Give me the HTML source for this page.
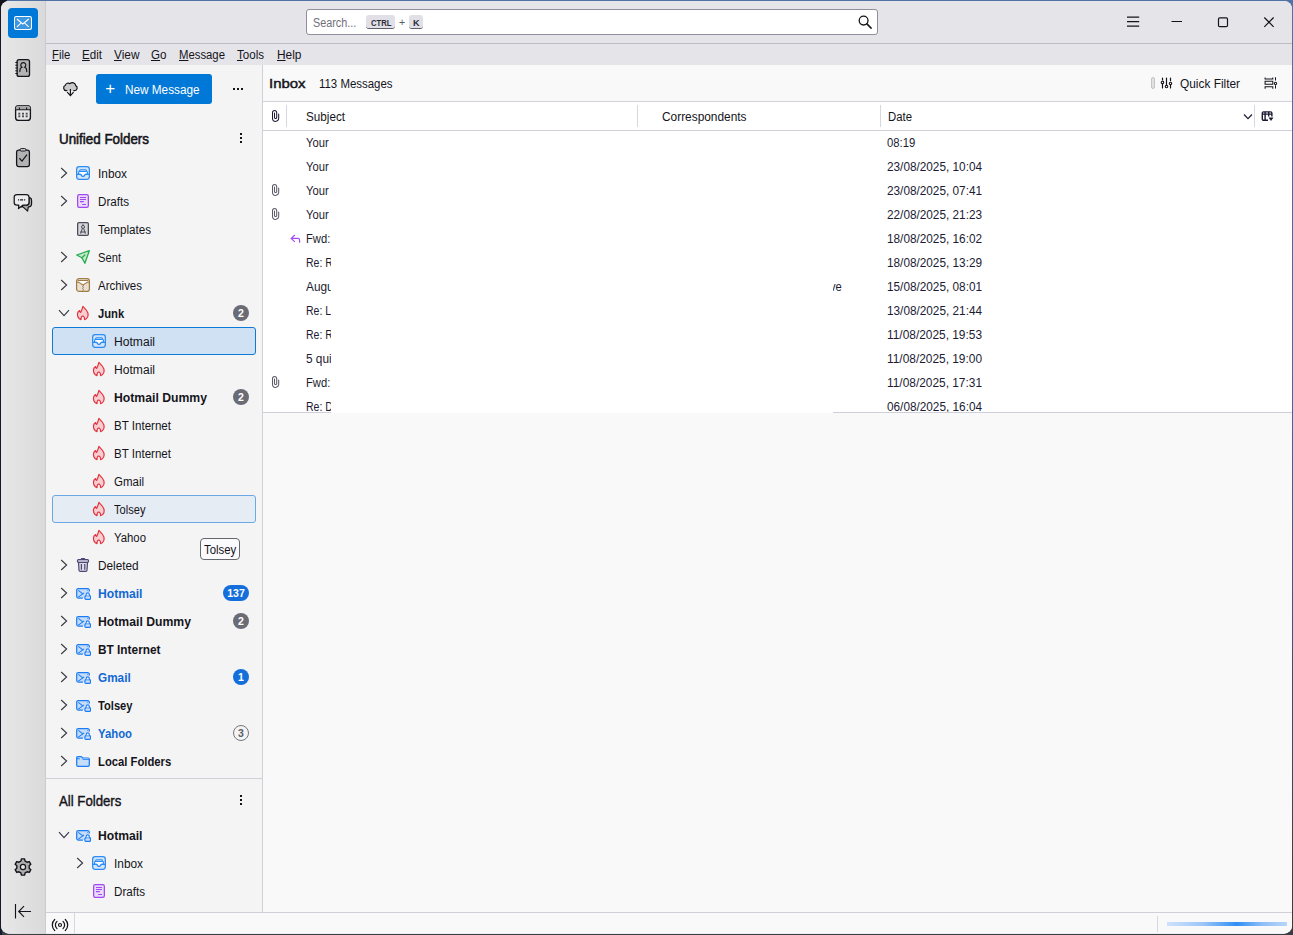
<!DOCTYPE html>
<html lang="en"><head><meta charset="utf-8"><title>Inbox - Mozilla Thunderbird</title>
<style>

html,body{margin:0;padding:0}
body{width:1293px;height:935px;overflow:hidden;background:linear-gradient(#10131c,#10131c) 0 0/7px 7px no-repeat,linear-gradient(90deg,#141a2c 0,#141a2c 2px,transparent 2px),linear-gradient(180deg,#5272a6 0,#5272a6 3px,#4468a8 40%,#3b4a66 80%,#3a3d42 98%);font-family:"Liberation Sans",sans-serif;position:relative}
#win{position:absolute;left:0;top:0;width:1293px;height:935px;clip-path:inset(1px 1px 1.300px 1px round 8px);background:#f9f9fa;color:#15141a;font-size:12px}
#win div,#win svg,#win span{position:absolute}
.t{white-space:pre;transform-origin:0 0}
.u{text-decoration:underline;text-underline-offset:0.5px;text-decoration-thickness:1px}
#spaces{left:0;top:0;width:45px;height:935px;background:linear-gradient(90deg,#e8e8e8,#dadada);border-right:1px solid #cbcbd0}
#titlebar{left:46px;top:0;width:1247px;height:43px;background:#e4e4e9;border-bottom:1px solid #bcbcc4}
#menubar{left:46px;top:44px;width:1247px;height:21px;background:#e4e4e9}
#fpane{left:46px;top:65px;width:216px;height:847px;background:#f4f4f5;border-right:1px solid #d0d0d8}
#lhead{left:263px;top:65px;width:1030px;height:36px;background:#f9f9fa;border-bottom:1px solid #d2d2dc}
#thead{left:263px;top:102px;width:1030px;height:28px;background:#fff;border-bottom:1px solid #cfcfda}
#rows{left:263px;top:131px;width:1030px;height:281px;background:#fff;border-bottom:1px solid #cfcfda}
#redact{left:331px;top:131px;width:502px;height:282px;background:#fff}
#status{left:46px;top:912px;width:1247px;height:22px;background:#f9f9fa;border-top:1px solid #cfcfd8;box-sizing:border-box}
.vsep{width:1px;background:#d7d7e0}
.badge{height:16px;border-radius:8px;box-sizing:border-box;color:#fff;font-weight:700;font-size:10.500px;line-height:16px;text-align:center}
.kbd{height:13px;background:#e0e0e6;border-bottom:1px solid #5e5e6a;border-radius:3px;box-sizing:content-box}

</style></head>
<body>
<div id="win">
<div id="spaces"></div><div id="titlebar"></div><div id="menubar"></div><div id="fpane"></div>
<div id="lhead"></div><div id="thead"></div><div id="rows"></div>
<div style="left:8px;top:8px;width:30px;height:30px;border-radius:4px;background:#0078d7"></div>
<svg style="left:14px;top:16px" width="18" height="14" viewBox="0 0 18 14" ><rect x="0.500" y="0.500" width="17" height="13" rx="2" fill="#3d97e0" stroke="#fff" stroke-width="1.050"/><path d="M2.900 3L8.800 8l5.900-5M2.900 10.800l4-3.700M14.700 10.800l-4-3.700" fill="none" stroke="#fff" stroke-width="1.050"/></svg>
<svg style="left:14px;top:58px" width="18" height="20" viewBox="0 0 18 20" ><rect x="3.100" y="1.600" width="12.400" height="16.800" rx="2" fill="#b2b2b2" stroke="#15141a" stroke-width="1.350"/><path d="M1.300 4.500h2.400M1.300 7.200h2.400M1.300 10h2.400M1.300 12.800h2.400M1.300 15.500h2.400" stroke="#15141a" stroke-width="1"/><path d="M5.900 13.600v-1.400a3.200 3.200 0 0 1 2-3 2.500 2.500 0 1 1 2.800 0 3.200 3.200 0 0 1 2 3v1.400" fill="none" stroke="#15141a" stroke-width="1.150" stroke-linecap="round"/></svg>
<svg style="left:14px;top:104px" width="18" height="18" viewBox="0 0 18 18" ><rect x="1.600" y="1.600" width="14.800" height="14.800" rx="3" fill="#e6e6e6" stroke="#15141a" stroke-width="1.350"/><path d="M1.800 5.600h14.400V4.400a2.600 2.600 0 0 0-2.600-2.600H4.400a2.600 2.600 0 0 0-2.600 2.600z" fill="#a8a8a8"/><path d="M1.800 5.800h14.400" stroke="#15141a" stroke-width="1.100"/><path d="M5.400 3.600v2.200M12.600 3.600v2.200" stroke="#15141a" stroke-width="1.100"/><path d="M4.300 9.300h2M8 9.300h2M11.700 9.300h2M4.300 11h2M8 11h2M11.700 11h2M4.300 12.700h2M8 12.700h2M11.700 12.700h2" stroke="#15141a" stroke-width="0.9"/></svg>
<svg style="left:14px;top:147px" width="18" height="22" viewBox="0 0 18 22" ><rect x="2.600" y="3.200" width="12.800" height="16.400" rx="2" fill="#b2b2b2" stroke="#15141a" stroke-width="1.300"/><rect x="6" y="1.600" width="6" height="2.400" rx="1.200" fill="#d8d8d8" stroke="#15141a" stroke-width="1"/><path d="M5.400 11.300l2.600 2.800 5-6.400" fill="none" stroke="#15141a" stroke-width="1.250"/></svg>
<svg style="left:12px;top:192px" width="22" height="22" viewBox="0 0 22 22" ><path d="M17 5.600a2.700 2.700 0 0 1 2.600 2.700v3.800a2.700 2.700 0 0 1-2.700 2.700h-.6l-.7 4.400-4.600-4.400H9l2-1.600h3.300a2.700 2.700 0 0 0 2.700-2.700z" fill="#a9a9a9" stroke="#15141a" stroke-width="1.150" stroke-linejoin="round"/><path d="M4.900 2.500h9.400A2.700 2.700 0 0 1 17 5.200v5.300a2.700 2.700 0 0 1-2.700 2.700H10.800l-4.300 3.300.3-3.300H4.900a2.700 2.700 0 0 1-2.700-2.700V5.200a2.700 2.700 0 0 1 2.700-2.700z" fill="#ececec" stroke="#15141a" stroke-width="1.250" stroke-linejoin="round"/><path d="M6 7.800h1.100M8.100 7.800h3M12.100 7.800h1.100" stroke="#15141a" stroke-width="1.200"/></svg>
<svg style="left:13px;top:857px" width="20" height="20" viewBox="0 0 20 20" ><path d="M8.43 1.85 L11.57 1.85 L12.10 4.06 L14.09 5.21 L16.27 4.57 L17.84 7.28 L16.19 8.85 L16.19 11.15 L17.84 12.72 L16.27 15.43 L14.09 14.79 L12.10 15.94 L11.57 18.15 L8.43 18.15 L7.90 15.94 L5.91 14.79 L3.73 15.43 L2.16 12.72 L3.81 11.15 L3.81 8.85 L2.16 7.28 L3.73 4.57 L5.91 5.21 L7.90 4.06Z" fill="#adadad" stroke="#15141a" stroke-width="1.400" stroke-linejoin="round"/><circle cx="10" cy="10" r="2.600" fill="#e6e6e6" stroke="#15141a" stroke-width="1.200"/></svg>
<svg style="left:13px;top:903px" width="20" height="18" viewBox="0 0 20 18" ><path d="M2.500 1v14.600M18 8.500H6M11 3.200L5.700 8.500l5.300 5.300" fill="none" stroke="#15141a" stroke-width="1.150"/></svg>
<div style="left:306px;top:9px;width:570px;height:24px;background:#fff;border:1px solid #8f8f9d;border-radius:3px"></div>
<div class="kbd" style="left:366px;top:15px;width:29px"></div>
<div class="kbd" style="left:409px;top:15px;width:13.500px"></div>
<svg style="left:857px;top:14px" width="16" height="16" viewBox="0 0 16 16" ><circle cx="6.600" cy="6.600" r="4.400" fill="none" stroke="#15141a" stroke-width="1.300"/><path d="M9.900 9.900l4.200 4.200" stroke="#15141a" stroke-width="1.500" stroke-linecap="round"/></svg>
<svg style="left:1126px;top:15px" width="14" height="13" viewBox="0 0 14 13" ><path d="M1 2.200h12.200M1 6.600h12.200M1 11.100h12.200" stroke="#15141a" stroke-width="1.200"/></svg>
<svg style="left:1171px;top:20px" width="12" height="3" viewBox="0 0 12 3" ><path d="M0.500 1.500h10.500" stroke="#15141a" stroke-width="1.100"/></svg>
<svg style="left:1216px;top:15px" width="13" height="13" viewBox="0 0 13 13" ><rect x="2.500" y="2.900" width="9" height="8.700" rx="1.200" fill="none" stroke="#15141a" stroke-width="1.200"/></svg>
<svg style="left:1262px;top:15px" width="13" height="13" viewBox="0 0 13 13" ><path d="M2.300 2.500l9.300 9.300M11.600 2.500l-9.300 9.300" stroke="#15141a" stroke-width="1.200"/></svg>
<svg style="left:61px;top:79px" width="18" height="18" viewBox="0 0 18 18" ><path d="M5.900 11.700H5.200A2.900 2.900 0 0 1 4.300 6.200 3 3 0 0 1 9 4.700 3.300 3.300 0 0 1 14.700 6.600 2.700 2.700 0 0 1 13.400 11.700H12.800" fill="#c9c9c9" stroke="#15141a" stroke-width="1.200" stroke-linejoin="round" stroke-linecap="round"/><path d="M9.400 10v6.300M6.200 13.200l3.200 3.400 3.200-3.400" fill="none" stroke="#15141a" stroke-width="1.200"/></svg>
<div style="left:96px;top:74px;width:116px;height:30px;border-radius:3px;background:#0078d7"></div>
<svg style="left:233px;top:88px" width="10" height="2" viewBox="0 0 10 2" shape-rendering="crispEdges"><path d="M0 0h2v2H0zM4 0h2v2H4zM8 0h2v2H8z" fill="#15141a"/></svg>
<svg style="left:240px;top:133px" width="2" height="10" viewBox="0 0 2 10" shape-rendering="crispEdges"><path d="M0 0h2v2H0zM0 4h2v2H0zM0 8h2v2H0z" fill="#15141a"/></svg>
<div style="left:52px;top:327px;width:202px;height:26px;border:1px solid #0b7ad8;border-radius:3px;background:#cfe1f2"></div>
<div style="left:52px;top:495px;width:202px;height:26px;border:1px solid #6aa9e6;border-radius:3px;background:#e6ecf4"></div>
<svg style="left:59px;top:166px" width="10" height="14" viewBox="0 0 10 14" ><path d="M2.200 2l5.400 5-5.400 5" fill="none" stroke="#3a3a44" stroke-width="1.15" stroke-linejoin="miter"/></svg>
<svg style="left:75px;top:165px" width="16" height="16" viewBox="0 0 16 16" ><rect x="1.650" y="1.650" width="12.700" height="12.700" rx="2.500" fill="#d5e5f8" stroke="#2b8cf5" stroke-width="1.250"/><path d="M4.700 6.500V5.500a.6.600 0 0 1 .6-.6h5.400a.6.600 0 0 1 .6.600v1" fill="#fff" stroke="#2b8cf5" stroke-width="1.100"/><path d="M3.600 9.300V7.200a.7.700 0 0 1 .7-.7h7.400a.7.700 0 0 1 .7.700V9.300h-1.800c-.9 0-1.200 2.200-2.600 2.200S6.300 9.300 5.400 9.300z" fill="#fff" stroke="#2b8cf5" stroke-width="1.100" stroke-linejoin="round"/><path d="M1.800 9.300H5.400c.9 0 1.200 2.200 2.600 2.200s1.700-2.200 2.600-2.200h3.600" fill="none" stroke="#2b8cf5" stroke-width="1.150"/></svg>
<svg style="left:59px;top:194px" width="10" height="14" viewBox="0 0 10 14" ><path d="M2.200 2l5.400 5-5.400 5" fill="none" stroke="#3a3a44" stroke-width="1.15" stroke-linejoin="miter"/></svg>
<svg style="left:75px;top:193px" width="16" height="16" viewBox="0 0 16 16" ><rect x="2.650" y="1.650" width="10.700" height="12.700" rx="1.600" fill="#e9dcf8" stroke="#a347f2" stroke-width="1.25"/><path d="M5 4.500h6M5 6.500h6M5 8.600h3.800M7.200 11.500h3.800" stroke="#a347f2" stroke-width="1.1"/></svg>
<svg style="left:75px;top:221px" width="16" height="16" viewBox="0 0 16 16" ><rect x="2.650" y="1.650" width="10.700" height="12.700" rx="1.200" fill="#d6d6da" stroke="#4b4b58" stroke-width="1.25"/><circle cx="8" cy="5.900" r="1.500" fill="none" stroke="#4b4b58" stroke-width="1"/><path d="M8 3.200v1.200M7.400 7.300L5.600 12.600M8.600 7.300l1.800 5.300M5.200 11h5.600" stroke="#4b4b58" stroke-width="1" fill="none"/></svg>
<svg style="left:59px;top:250px" width="10" height="14" viewBox="0 0 10 14" ><path d="M2.200 2l5.400 5-5.400 5" fill="none" stroke="#3a3a44" stroke-width="1.15" stroke-linejoin="miter"/></svg>
<svg style="left:75px;top:249px" width="16" height="16" viewBox="0 0 16 16" ><path d="M1.700 6L14.300 1.700 9.900 14.300 6.900 8.800z" fill="#c5e8cf" stroke="#24ad4c" stroke-width="1.3" stroke-linejoin="round"/><path d="M6.900 8.800L9.900 6" stroke="#24ad4c" stroke-width="1.2" stroke-linecap="round"/></svg>
<svg style="left:59px;top:278px" width="10" height="14" viewBox="0 0 10 14" ><path d="M2.200 2l5.400 5-5.400 5" fill="none" stroke="#3a3a44" stroke-width="1.15" stroke-linejoin="miter"/></svg>
<svg style="left:75px;top:277px" width="16" height="16" viewBox="0 0 16 16" ><rect x="1.600" y="1.600" width="12.800" height="12.800" rx="2.500" fill="#e9e1d6" stroke="#a27c45" stroke-width="1.25"/><path d="M2.400 3.500h11.200v1.600h-1L8 8 3.400 5.100h-1z" fill="#fff"/><path d="M2.600 3.500h10.800M1.800 5.100h1.700L8 8l4.500-2.900h1.700" fill="none" stroke="#a27c45" stroke-width="1.1" stroke-linejoin="round"/><path d="M8 8l.6.700-1.200.900 1.200.900-1.200.900 1.200.900-.6.700v1.200" fill="none" stroke="#a27c45" stroke-width="0.9"/></svg>
<svg style="left:57px;top:308px" width="14" height="10" viewBox="0 0 14 10" ><path d="M2 2.200l5 5.400 5-5.400" fill="none" stroke="#3a3a44" stroke-width="1.15"/></svg>
<svg style="left:75px;top:305px" width="16" height="16" viewBox="0 0 16 16" ><path d="M7.900 1.300C9 3 12 4.800 12.900 8c.6 2.600-.4 5.600-3.300 6.600C9.600 12.800 9 11.100 7.700 11 6.500 11.100 6 12.800 6 14.600C3.600 13.700 2.300 11.200 2.500 8.800 2.700 7.300 3.500 6.200 4.500 5.600C4.500 6.500 4.900 7.200 5.600 7.500 6.500 5.800 7.300 3.800 7.900 1.300z" fill="#f6cdd0" stroke="#e5343e" stroke-width="1.2" stroke-linejoin="round"/></svg>
<div class="badge" style="left:233px;top:305px;width:16px;background:#6b6b76">2</div>
<svg style="left:91px;top:333px" width="16" height="16" viewBox="0 0 16 16" ><rect x="1.650" y="1.650" width="12.700" height="12.700" rx="2.500" fill="#d5e5f8" stroke="#2b8cf5" stroke-width="1.250"/><path d="M4.700 6.500V5.500a.6.600 0 0 1 .6-.6h5.400a.6.600 0 0 1 .6.600v1" fill="#fff" stroke="#2b8cf5" stroke-width="1.100"/><path d="M3.600 9.300V7.200a.7.700 0 0 1 .7-.7h7.400a.7.700 0 0 1 .7.700V9.300h-1.800c-.9 0-1.200 2.200-2.600 2.200S6.300 9.300 5.400 9.300z" fill="#fff" stroke="#2b8cf5" stroke-width="1.100" stroke-linejoin="round"/><path d="M1.800 9.300H5.400c.9 0 1.200 2.200 2.600 2.200s1.700-2.200 2.600-2.200h3.600" fill="none" stroke="#2b8cf5" stroke-width="1.150"/></svg>
<svg style="left:91px;top:361px" width="16" height="16" viewBox="0 0 16 16" ><path d="M7.900 1.300C9 3 12 4.800 12.900 8c.6 2.600-.4 5.600-3.300 6.600C9.600 12.800 9 11.100 7.700 11 6.500 11.100 6 12.800 6 14.600C3.600 13.700 2.300 11.200 2.500 8.800 2.700 7.300 3.500 6.200 4.500 5.600C4.500 6.500 4.900 7.200 5.600 7.500 6.500 5.800 7.300 3.800 7.900 1.300z" fill="#f6cdd0" stroke="#e5343e" stroke-width="1.2" stroke-linejoin="round"/></svg>
<svg style="left:91px;top:389px" width="16" height="16" viewBox="0 0 16 16" ><path d="M7.900 1.300C9 3 12 4.800 12.900 8c.6 2.600-.4 5.600-3.300 6.600C9.600 12.800 9 11.100 7.700 11 6.500 11.100 6 12.800 6 14.600C3.600 13.700 2.300 11.200 2.500 8.800 2.700 7.300 3.500 6.200 4.500 5.600C4.500 6.500 4.900 7.200 5.600 7.500 6.500 5.800 7.300 3.800 7.900 1.300z" fill="#f6cdd0" stroke="#e5343e" stroke-width="1.2" stroke-linejoin="round"/></svg>
<div class="badge" style="left:233px;top:389px;width:16px;background:#6b6b76">2</div>
<svg style="left:91px;top:417px" width="16" height="16" viewBox="0 0 16 16" ><path d="M7.900 1.300C9 3 12 4.800 12.900 8c.6 2.600-.4 5.600-3.300 6.600C9.600 12.800 9 11.100 7.700 11 6.500 11.100 6 12.800 6 14.600C3.600 13.700 2.300 11.200 2.500 8.800 2.700 7.300 3.500 6.200 4.500 5.600C4.500 6.500 4.900 7.200 5.600 7.500 6.500 5.800 7.300 3.800 7.900 1.300z" fill="#f6cdd0" stroke="#e5343e" stroke-width="1.2" stroke-linejoin="round"/></svg>
<svg style="left:91px;top:445px" width="16" height="16" viewBox="0 0 16 16" ><path d="M7.900 1.300C9 3 12 4.800 12.900 8c.6 2.600-.4 5.600-3.300 6.600C9.600 12.800 9 11.100 7.700 11 6.500 11.100 6 12.800 6 14.600C3.600 13.700 2.300 11.200 2.500 8.800 2.700 7.300 3.500 6.200 4.500 5.600C4.500 6.500 4.900 7.200 5.600 7.500 6.500 5.800 7.300 3.800 7.900 1.300z" fill="#f6cdd0" stroke="#e5343e" stroke-width="1.2" stroke-linejoin="round"/></svg>
<svg style="left:91px;top:473px" width="16" height="16" viewBox="0 0 16 16" ><path d="M7.900 1.300C9 3 12 4.800 12.900 8c.6 2.600-.4 5.600-3.300 6.600C9.600 12.800 9 11.100 7.700 11 6.500 11.100 6 12.800 6 14.600C3.600 13.700 2.300 11.200 2.500 8.800 2.700 7.300 3.500 6.200 4.500 5.600C4.500 6.500 4.900 7.200 5.600 7.500 6.500 5.800 7.300 3.800 7.900 1.300z" fill="#f6cdd0" stroke="#e5343e" stroke-width="1.2" stroke-linejoin="round"/></svg>
<svg style="left:91px;top:501px" width="16" height="16" viewBox="0 0 16 16" ><path d="M7.900 1.300C9 3 12 4.800 12.900 8c.6 2.600-.4 5.600-3.300 6.600C9.600 12.800 9 11.100 7.700 11 6.500 11.100 6 12.800 6 14.600C3.600 13.700 2.300 11.200 2.500 8.800 2.700 7.300 3.500 6.200 4.500 5.600C4.500 6.500 4.900 7.200 5.600 7.500 6.500 5.800 7.300 3.800 7.900 1.300z" fill="#f6cdd0" stroke="#e5343e" stroke-width="1.2" stroke-linejoin="round"/></svg>
<svg style="left:91px;top:529px" width="16" height="16" viewBox="0 0 16 16" ><path d="M7.900 1.300C9 3 12 4.800 12.900 8c.6 2.600-.4 5.600-3.300 6.600C9.600 12.800 9 11.100 7.700 11 6.500 11.100 6 12.800 6 14.600C3.600 13.700 2.300 11.200 2.500 8.800 2.700 7.300 3.500 6.200 4.500 5.600C4.500 6.500 4.900 7.200 5.600 7.500 6.500 5.800 7.300 3.800 7.900 1.300z" fill="#f6cdd0" stroke="#e5343e" stroke-width="1.2" stroke-linejoin="round"/></svg>
<svg style="left:59px;top:558px" width="10" height="14" viewBox="0 0 10 14" ><path d="M2.200 2l5.400 5-5.400 5" fill="none" stroke="#3a3a44" stroke-width="1.15" stroke-linejoin="miter"/></svg>
<svg style="left:75px;top:557px" width="16" height="16" viewBox="0 0 16 16" ><path d="M3.500 5.400h9l-.5 7.800a1.300 1.300 0 0 1-1.300 1.200H5.300a1.300 1.300 0 0 1-1.300-1.200z" fill="#dcdae6" stroke="#4b4674" stroke-width="1.2" stroke-linejoin="round"/><path d="M6.300 2.400V2a.5.500 0 0 1 .5-.5h2.400a.5.500 0 0 1 .5.500v.4" fill="none" stroke="#4b4674" stroke-width="1.1"/><rect x="2.500" y="2.600" width="11" height="2.700" rx="1" fill="#dcdae6" stroke="#4b4674" stroke-width="1.2"/><path d="M6.400 7v5.700M9.800 7v5.700" stroke="#4b4674" stroke-width="1.2"/></svg>
<svg style="left:59px;top:586px" width="10" height="14" viewBox="0 0 10 14" ><path d="M2.200 2l5.400 5-5.400 5" fill="none" stroke="#3a3a44" stroke-width="1.15" stroke-linejoin="miter"/></svg>
<svg style="left:75px;top:585px" width="16" height="16" viewBox="0 0 16 16" ><path d="M1.700 5.200a1.500 1.500 0 0 1 1.500-1.500h9.600a1.500 1.500 0 0 1 1.500 1.500v2.200h-3.500l-1.500 2.400v3.300H3.200a1.500 1.500 0 0 1-1.500-1.500z" fill="#c6dcf7"/><path d="M7.900 13.100H3.200a1.500 1.500 0 0 1-1.500-1.500V5.200a1.500 1.500 0 0 1 1.500-1.500h9.600a1.500 1.500 0 0 1 1.500 1.500v1.300" fill="none" stroke="#1b7df5" stroke-width="1.25"/><path d="M3.300 5.300L7.800 8.900 3.300 12.200" fill="none" stroke="#1b7df5" stroke-width="1.05" stroke-linejoin="round"/><path d="M7.800 8.900l1.300-1M12.100 5.500l.5-.4" stroke="#1b7df5" stroke-width="1.05"/><rect x="9.900" y="10.700" width="5.600" height="3.600" rx="1" fill="#c6dcf7" stroke="#1b7df5" stroke-width="1.2"/><path d="M11.100 10.600V9.500a1.600 1.600 0 0 1 3.200 0v1.100" fill="#fff" stroke="#1b7df5" stroke-width="1.200"/></svg>
<div class="badge" style="left:223px;top:585px;width:26px;background:#146fdb">137</div>
<svg style="left:59px;top:614px" width="10" height="14" viewBox="0 0 10 14" ><path d="M2.200 2l5.400 5-5.400 5" fill="none" stroke="#3a3a44" stroke-width="1.15" stroke-linejoin="miter"/></svg>
<svg style="left:75px;top:613px" width="16" height="16" viewBox="0 0 16 16" ><path d="M1.700 5.200a1.500 1.500 0 0 1 1.500-1.500h9.600a1.500 1.500 0 0 1 1.500 1.500v2.200h-3.500l-1.500 2.400v3.300H3.200a1.500 1.500 0 0 1-1.500-1.500z" fill="#c6dcf7"/><path d="M7.900 13.100H3.200a1.500 1.500 0 0 1-1.500-1.500V5.200a1.500 1.500 0 0 1 1.500-1.500h9.600a1.500 1.500 0 0 1 1.500 1.500v1.300" fill="none" stroke="#1b7df5" stroke-width="1.25"/><path d="M3.300 5.300L7.800 8.900 3.300 12.200" fill="none" stroke="#1b7df5" stroke-width="1.05" stroke-linejoin="round"/><path d="M7.800 8.900l1.300-1M12.100 5.500l.5-.4" stroke="#1b7df5" stroke-width="1.05"/><rect x="9.900" y="10.700" width="5.600" height="3.600" rx="1" fill="#c6dcf7" stroke="#1b7df5" stroke-width="1.2"/><path d="M11.100 10.600V9.500a1.600 1.600 0 0 1 3.200 0v1.100" fill="#fff" stroke="#1b7df5" stroke-width="1.200"/></svg>
<div class="badge" style="left:233px;top:613px;width:16px;background:#6b6b76">2</div>
<svg style="left:59px;top:642px" width="10" height="14" viewBox="0 0 10 14" ><path d="M2.200 2l5.400 5-5.400 5" fill="none" stroke="#3a3a44" stroke-width="1.15" stroke-linejoin="miter"/></svg>
<svg style="left:75px;top:641px" width="16" height="16" viewBox="0 0 16 16" ><path d="M1.700 5.200a1.500 1.500 0 0 1 1.500-1.500h9.600a1.500 1.500 0 0 1 1.500 1.500v2.200h-3.500l-1.500 2.400v3.300H3.200a1.500 1.500 0 0 1-1.500-1.500z" fill="#c6dcf7"/><path d="M7.900 13.100H3.200a1.500 1.500 0 0 1-1.500-1.500V5.200a1.500 1.500 0 0 1 1.500-1.500h9.600a1.500 1.500 0 0 1 1.500 1.500v1.300" fill="none" stroke="#1b7df5" stroke-width="1.25"/><path d="M3.300 5.300L7.800 8.900 3.300 12.200" fill="none" stroke="#1b7df5" stroke-width="1.05" stroke-linejoin="round"/><path d="M7.800 8.900l1.300-1M12.100 5.500l.5-.4" stroke="#1b7df5" stroke-width="1.05"/><rect x="9.900" y="10.700" width="5.600" height="3.600" rx="1" fill="#c6dcf7" stroke="#1b7df5" stroke-width="1.2"/><path d="M11.100 10.600V9.500a1.600 1.600 0 0 1 3.200 0v1.100" fill="#fff" stroke="#1b7df5" stroke-width="1.200"/></svg>
<svg style="left:59px;top:670px" width="10" height="14" viewBox="0 0 10 14" ><path d="M2.200 2l5.400 5-5.400 5" fill="none" stroke="#3a3a44" stroke-width="1.15" stroke-linejoin="miter"/></svg>
<svg style="left:75px;top:669px" width="16" height="16" viewBox="0 0 16 16" ><path d="M1.700 5.200a1.500 1.500 0 0 1 1.500-1.500h9.600a1.500 1.500 0 0 1 1.500 1.500v2.200h-3.500l-1.500 2.400v3.300H3.200a1.500 1.500 0 0 1-1.500-1.500z" fill="#c6dcf7"/><path d="M7.900 13.100H3.200a1.500 1.500 0 0 1-1.500-1.500V5.200a1.500 1.500 0 0 1 1.500-1.500h9.600a1.500 1.500 0 0 1 1.500 1.500v1.300" fill="none" stroke="#1b7df5" stroke-width="1.25"/><path d="M3.300 5.300L7.800 8.900 3.300 12.200" fill="none" stroke="#1b7df5" stroke-width="1.05" stroke-linejoin="round"/><path d="M7.800 8.900l1.300-1M12.100 5.500l.5-.4" stroke="#1b7df5" stroke-width="1.05"/><rect x="9.900" y="10.700" width="5.600" height="3.600" rx="1" fill="#c6dcf7" stroke="#1b7df5" stroke-width="1.2"/><path d="M11.100 10.600V9.500a1.600 1.600 0 0 1 3.200 0v1.100" fill="#fff" stroke="#1b7df5" stroke-width="1.200"/></svg>
<div class="badge" style="left:233px;top:669px;width:16px;background:#146fdb">1</div>
<svg style="left:59px;top:698px" width="10" height="14" viewBox="0 0 10 14" ><path d="M2.200 2l5.400 5-5.400 5" fill="none" stroke="#3a3a44" stroke-width="1.15" stroke-linejoin="miter"/></svg>
<svg style="left:75px;top:697px" width="16" height="16" viewBox="0 0 16 16" ><path d="M1.700 5.200a1.500 1.500 0 0 1 1.500-1.500h9.600a1.500 1.500 0 0 1 1.500 1.500v2.200h-3.500l-1.500 2.400v3.300H3.200a1.500 1.500 0 0 1-1.500-1.500z" fill="#c6dcf7"/><path d="M7.900 13.100H3.200a1.500 1.500 0 0 1-1.500-1.500V5.200a1.500 1.500 0 0 1 1.500-1.500h9.600a1.500 1.500 0 0 1 1.500 1.500v1.300" fill="none" stroke="#1b7df5" stroke-width="1.25"/><path d="M3.300 5.300L7.800 8.900 3.300 12.200" fill="none" stroke="#1b7df5" stroke-width="1.05" stroke-linejoin="round"/><path d="M7.800 8.900l1.300-1M12.100 5.500l.5-.4" stroke="#1b7df5" stroke-width="1.05"/><rect x="9.900" y="10.700" width="5.600" height="3.600" rx="1" fill="#c6dcf7" stroke="#1b7df5" stroke-width="1.2"/><path d="M11.100 10.600V9.500a1.600 1.600 0 0 1 3.200 0v1.100" fill="#fff" stroke="#1b7df5" stroke-width="1.200"/></svg>
<svg style="left:59px;top:726px" width="10" height="14" viewBox="0 0 10 14" ><path d="M2.200 2l5.400 5-5.400 5" fill="none" stroke="#3a3a44" stroke-width="1.15" stroke-linejoin="miter"/></svg>
<svg style="left:75px;top:725px" width="16" height="16" viewBox="0 0 16 16" ><path d="M1.700 5.200a1.500 1.500 0 0 1 1.500-1.500h9.600a1.500 1.500 0 0 1 1.500 1.500v2.200h-3.500l-1.500 2.400v3.300H3.200a1.500 1.500 0 0 1-1.500-1.500z" fill="#c6dcf7"/><path d="M7.900 13.100H3.200a1.500 1.500 0 0 1-1.500-1.500V5.200a1.500 1.500 0 0 1 1.500-1.500h9.600a1.500 1.500 0 0 1 1.500 1.500v1.300" fill="none" stroke="#1b7df5" stroke-width="1.25"/><path d="M3.300 5.300L7.800 8.900 3.300 12.200" fill="none" stroke="#1b7df5" stroke-width="1.05" stroke-linejoin="round"/><path d="M7.800 8.900l1.300-1M12.100 5.500l.5-.4" stroke="#1b7df5" stroke-width="1.05"/><rect x="9.900" y="10.700" width="5.600" height="3.600" rx="1" fill="#c6dcf7" stroke="#1b7df5" stroke-width="1.2"/><path d="M11.100 10.600V9.500a1.600 1.600 0 0 1 3.200 0v1.100" fill="#fff" stroke="#1b7df5" stroke-width="1.200"/></svg>
<div class="badge" style="left:233px;top:725px;width:16px;border:1px solid #74747f;color:#5b5b66;line-height:14px;font-weight:700">3</div>
<svg style="left:59px;top:754px" width="10" height="14" viewBox="0 0 10 14" ><path d="M2.200 2l5.400 5-5.400 5" fill="none" stroke="#3a3a44" stroke-width="1.15" stroke-linejoin="miter"/></svg>
<svg style="left:75px;top:753px" width="16" height="16" viewBox="0 0 16 16" ><path d="M1.700 4.700a1.100 1.100 0 0 1 1.100-1.100h3.500l1.600 1.400h5.300a1.100 1.100 0 0 1 1.100 1.100v5.900a1.300 1.300 0 0 1-1.300 1.300H3a1.300 1.300 0 0 1-1.300-1.300z" fill="#c6dcf7" stroke="#1b7df5" stroke-width="1.25" stroke-linejoin="round"/><path d="M8.300 5.100h5.400v.5H8.300z" fill="#fff"/><path d="M1.900 5.800H4.800M7.600 6.200h6.600" fill="none" stroke="#1b7df5" stroke-width="1.1"/></svg>
<svg style="left:57px;top:830px" width="14" height="10" viewBox="0 0 14 10" ><path d="M2 2.200l5 5.400 5-5.400" fill="none" stroke="#3a3a44" stroke-width="1.15"/></svg>
<svg style="left:75px;top:827px" width="16" height="16" viewBox="0 0 16 16" ><path d="M1.700 5.200a1.500 1.500 0 0 1 1.500-1.500h9.600a1.500 1.500 0 0 1 1.500 1.500v2.200h-3.500l-1.500 2.400v3.300H3.200a1.500 1.500 0 0 1-1.500-1.500z" fill="#c6dcf7"/><path d="M7.900 13.100H3.200a1.500 1.500 0 0 1-1.500-1.500V5.200a1.500 1.500 0 0 1 1.500-1.500h9.600a1.500 1.500 0 0 1 1.500 1.500v1.300" fill="none" stroke="#1b7df5" stroke-width="1.25"/><path d="M3.300 5.300L7.800 8.900 3.300 12.200" fill="none" stroke="#1b7df5" stroke-width="1.05" stroke-linejoin="round"/><path d="M7.800 8.900l1.300-1M12.100 5.500l.5-.4" stroke="#1b7df5" stroke-width="1.05"/><rect x="9.900" y="10.700" width="5.600" height="3.600" rx="1" fill="#c6dcf7" stroke="#1b7df5" stroke-width="1.2"/><path d="M11.100 10.600V9.500a1.600 1.600 0 0 1 3.200 0v1.100" fill="#fff" stroke="#1b7df5" stroke-width="1.200"/></svg>
<svg style="left:75px;top:856px" width="10" height="14" viewBox="0 0 10 14" ><path d="M2.200 2l5.400 5-5.400 5" fill="none" stroke="#3a3a44" stroke-width="1.15" stroke-linejoin="miter"/></svg>
<svg style="left:91px;top:855px" width="16" height="16" viewBox="0 0 16 16" ><rect x="1.650" y="1.650" width="12.700" height="12.700" rx="2.500" fill="#d5e5f8" stroke="#2b8cf5" stroke-width="1.250"/><path d="M4.700 6.500V5.500a.6.600 0 0 1 .6-.6h5.400a.6.600 0 0 1 .6.600v1" fill="#fff" stroke="#2b8cf5" stroke-width="1.100"/><path d="M3.600 9.300V7.200a.7.700 0 0 1 .7-.7h7.400a.7.700 0 0 1 .7.700V9.300h-1.800c-.9 0-1.200 2.200-2.600 2.200S6.300 9.300 5.400 9.300z" fill="#fff" stroke="#2b8cf5" stroke-width="1.100" stroke-linejoin="round"/><path d="M1.800 9.300H5.400c.9 0 1.200 2.200 2.600 2.200s1.700-2.200 2.600-2.200h3.600" fill="none" stroke="#2b8cf5" stroke-width="1.150"/></svg>
<svg style="left:91px;top:883px" width="16" height="16" viewBox="0 0 16 16" ><rect x="2.650" y="1.650" width="10.700" height="12.700" rx="1.600" fill="#e9dcf8" stroke="#a347f2" stroke-width="1.25"/><path d="M5 4.500h6M5 6.500h6M5 8.600h3.800M7.200 11.500h3.800" stroke="#a347f2" stroke-width="1.1"/></svg>
<div style="left:46px;top:778px;width:216px;height:1px;background:#d0d0d8"></div>
<svg style="left:240px;top:795px" width="2" height="10" viewBox="0 0 2 10" shape-rendering="crispEdges"><path d="M0 0h2v2H0zM0 4h2v2H0zM0 8h2v2H0z" fill="#15141a"/></svg>
<div style="left:1151px;top:77px;width:4px;height:12px;border:1px solid #c4c4c8;border-radius:2px;box-sizing:border-box;background:#e2e2e4"></div>
<svg style="left:1160px;top:77px" width="13" height="13" viewBox="0 0 13 13" ><path d="M2.500 1.100v1.600M2.500 6.700v4.200M6.500 1.100v7.200M10.500 1.100v2.600M10.500 7.800v3.100" stroke="#15141a" stroke-width="1.200" stroke-linecap="round"/><circle cx="2.500" cy="5.400" r="1.250" fill="none" stroke="#15141a" stroke-width="1.100"/><circle cx="6.500" cy="9.500" r="1.250" fill="none" stroke="#15141a" stroke-width="1.100"/><circle cx="10.500" cy="6.500" r="1.250" fill="none" stroke="#15141a" stroke-width="1.100"/></svg>
<svg style="left:1264px;top:76px" width="14" height="14" viewBox="0 0 14 14" ><path d="M1.100 1.400v1.500h7.700v-1.500M1.100 5.300h7.700v3h-7.700zM1.100 12.700v-2h7.700v2M11.500 1.300v3.300M11.500 9.300v3.300" fill="none" stroke="#15141a" stroke-width="1.050"/><circle cx="11.500" cy="7.400" r="1.150" fill="none" stroke="#15141a" stroke-width="1.050"/></svg>
<svg style="left:270px;top:109px" width="10" height="14" viewBox="0 0 10 14" ><path d="M4.500 4V8.400a1.100 1.100 0 0 0 2.200 0V3.500a2.100 2.100 0 0 0-4.200 0V9.300a3.100 3.100 0 0 0 6.200 0V5" fill="none" stroke="#1c1b33" stroke-width="1.050" stroke-linecap="round"/></svg>
<div class="vsep" style="left:286px;top:105px;height:22px"></div>
<div class="vsep" style="left:637px;top:105px;height:22px"></div>
<div class="vsep" style="left:880px;top:105px;height:22px"></div>
<div class="vsep" style="left:1254px;top:105px;height:22px"></div>
<svg style="left:1243px;top:112.5px" width="10" height="8" viewBox="0 0 10 8" ><path d="M1 1.500l4 4.200 4-4.200" fill="none" stroke="#1c1b33" stroke-width="1.200"/></svg>
<svg style="left:1261px;top:110px" width="13" height="12" viewBox="0 0 13 12" ><path d="M7 10.300H2.600a1.300 1.300 0 0 1-1.300-1.300V3.200a1.300 1.300 0 0 1 1.300-1.300h7a1.300 1.300 0 0 1 1.300 1.300V6.500M1.300 4.100h9.600M4.100 1.900v8.400M7.700 1.900v4.600" fill="none" stroke="#1c1b33" stroke-width="1.400"/><path d="M7.500 7.400h5l-2.500 3.500z" fill="#1c1b33"/></svg>
<svg style="left:270px;top:183.2px" width="10" height="14" viewBox="0 0 10 14" ><path d="M4.500 4V8.400a1.100 1.100 0 0 0 2.200 0V3.500a2.100 2.100 0 0 0-4.200 0V9.300a3.100 3.100 0 0 0 6.200 0V5" fill="none" stroke="#5a5a66" stroke-width="1.050" stroke-linecap="round"/></svg>
<svg style="left:270px;top:207.2px" width="10" height="14" viewBox="0 0 10 14" ><path d="M4.500 4V8.400a1.100 1.100 0 0 0 2.200 0V3.500a2.100 2.100 0 0 0-4.200 0V9.300a3.100 3.100 0 0 0 6.200 0V5" fill="none" stroke="#5a5a66" stroke-width="1.050" stroke-linecap="round"/></svg>
<svg style="left:270px;top:375.2px" width="10" height="14" viewBox="0 0 10 14" ><path d="M4.500 4V8.400a1.100 1.100 0 0 0 2.200 0V3.500a2.100 2.100 0 0 0-4.200 0V9.300a3.100 3.100 0 0 0 6.200 0V5" fill="none" stroke="#5a5a66" stroke-width="1.050" stroke-linecap="round"/></svg>
<svg style="left:289px;top:233px" width="12" height="11" viewBox="0 0 12 11" ><path d="M5.900 2L2.200 5.400l3.700 3.400M2.400 5.400H9a1.600 1.600 0 0 1 1.600 1.600V9.700" fill="none" stroke="#a64af2" stroke-width="1.150"/></svg>
<span class="t" style="left:313.3px;top:14.74px;font-size:12px;line-height:17px;color:#6f6f7a;transform:scaleX(0.901);">Search...</span>
<span class="t" style="left:370.5px;top:15.91px;font-size:9.5px;line-height:13px;font-weight:700;color:#2d2d38;transform:scaleX(0.809);">CTRL</span>
<span class="t" style="left:399.3px;top:14.89px;font-size:11px;line-height:15px;color:#5b5b66;transform:scaleX(0.960);">+</span>
<span class="t" style="left:413.0px;top:15.91px;font-size:9.5px;line-height:13px;font-weight:700;color:#2d2d38;transform:scaleX(0.960);">K</span>
<span class="t" style="left:51.8px;top:47.14px;font-size:12px;line-height:17px;transform:scaleX(0.940);"><span class="u" style="position:static">F</span>ile</span>
<span class="t" style="left:81.9px;top:47.14px;font-size:12px;line-height:17px;transform:scaleX(0.966);"><span class="u" style="position:static">E</span>dit</span>
<span class="t" style="left:113.9px;top:47.14px;font-size:12px;line-height:17px;transform:scaleX(0.988);"><span class="u" style="position:static">V</span>iew</span>
<span class="t" style="left:151.0px;top:47.14px;font-size:12px;line-height:17px;transform:scaleX(0.967);"><span class="u" style="position:static">G</span>o</span>
<span class="t" style="left:179.0px;top:47.14px;font-size:12px;line-height:17px;transform:scaleX(0.944);"><span class="u" style="position:static">M</span>essage</span>
<span class="t" style="left:237.0px;top:47.14px;font-size:12px;line-height:17px;transform:scaleX(0.964);"><span class="u" style="position:static">T</span>ools</span>
<span class="t" style="left:276.7px;top:47.14px;font-size:12px;line-height:17px;transform:scaleX(0.992);"><span class="u" style="position:static">H</span>elp</span>
<span class="t" style="left:105.3px;top:76.71px;font-size:17px;line-height:24px;color:#fff;">+</span>
<span class="t" style="left:125.0px;top:81.47px;font-size:12.5px;line-height:18px;color:#fff;transform:scaleX(0.941);">New Message</span>
<span class="t" style="left:58.5px;top:129.15px;font-size:14px;line-height:20px;transform:scaleX(0.956);-webkit-text-stroke:0.55px #15141a;">Unified Folders</span>
<span class="t" style="left:98.4px;top:165.74px;font-size:12px;line-height:17px;transform:scaleX(0.988);">Inbox</span>
<span class="t" style="left:98.4px;top:193.74px;font-size:12px;line-height:17px;transform:scaleX(0.968);">Drafts</span>
<span class="t" style="left:98.4px;top:221.74px;font-size:12px;line-height:17px;transform:scaleX(0.969);">Templates</span>
<span class="t" style="left:98.4px;top:249.74px;font-size:12px;line-height:17px;transform:scaleX(0.932);">Sent</span>
<span class="t" style="left:98.4px;top:277.74px;font-size:12px;line-height:17px;transform:scaleX(0.956);">Archives</span>
<span class="t" style="left:98.4px;top:306.24px;font-size:12px;line-height:17px;font-weight:700;transform:scaleX(0.935);">Junk</span>
<span class="t" style="left:114.4px;top:333.74px;font-size:12px;line-height:17px;transform:scaleX(1.008);">Hotmail</span>
<span class="t" style="left:114.4px;top:361.74px;font-size:12px;line-height:17px;transform:scaleX(1.008);">Hotmail</span>
<span class="t" style="left:114.4px;top:390.24px;font-size:12px;line-height:17px;font-weight:700;transform:scaleX(1.018);">Hotmail Dummy</span>
<span class="t" style="left:114.4px;top:417.74px;font-size:12px;line-height:17px;transform:scaleX(0.964);">BT Internet</span>
<span class="t" style="left:114.4px;top:445.74px;font-size:12px;line-height:17px;transform:scaleX(0.964);">BT Internet</span>
<span class="t" style="left:114.4px;top:473.74px;font-size:12px;line-height:17px;transform:scaleX(0.957);">Gmail</span>
<span class="t" style="left:114.4px;top:501.74px;font-size:12px;line-height:17px;transform:scaleX(0.926);">Tolsey</span>
<span class="t" style="left:114.4px;top:529.74px;font-size:12px;line-height:17px;transform:scaleX(0.946);">Yahoo</span>
<span class="t" style="left:98.4px;top:557.74px;font-size:12px;line-height:17px;transform:scaleX(0.981);">Deleted</span>
<span class="t" style="left:98.4px;top:586.24px;font-size:12px;line-height:17px;font-weight:700;color:#1268d3;transform:scaleX(1.011);">Hotmail</span>
<span class="t" style="left:98.4px;top:614.24px;font-size:12px;line-height:17px;font-weight:700;transform:scaleX(1.018);">Hotmail Dummy</span>
<span class="t" style="left:98.4px;top:642.24px;font-size:12px;line-height:17px;font-weight:700;transform:scaleX(0.987);">BT Internet</span>
<span class="t" style="left:98.4px;top:670.24px;font-size:12px;line-height:17px;font-weight:700;color:#1268d3;transform:scaleX(0.980);">Gmail</span>
<span class="t" style="left:98.4px;top:698.24px;font-size:12px;line-height:17px;font-weight:700;transform:scaleX(0.929);">Tolsey</span>
<span class="t" style="left:98.4px;top:726.24px;font-size:12px;line-height:17px;font-weight:700;color:#1268d3;transform:scaleX(0.944);">Yahoo</span>
<span class="t" style="left:98.4px;top:754.24px;font-size:12px;line-height:17px;font-weight:700;transform:scaleX(0.938);">Local Folders</span>
<span class="t" style="left:98.4px;top:828.24px;font-size:12px;line-height:17px;font-weight:700;transform:scaleX(1.011);">Hotmail</span>
<span class="t" style="left:114.4px;top:855.74px;font-size:12px;line-height:17px;transform:scaleX(0.988);">Inbox</span>
<span class="t" style="left:114.4px;top:883.74px;font-size:12px;line-height:17px;transform:scaleX(0.968);">Drafts</span>
<span class="t" style="left:58.5px;top:791.15px;font-size:14px;line-height:20px;transform:scaleX(0.942);-webkit-text-stroke:0.4px #15141a;">All Folders</span>
<span class="t" style="left:269.2px;top:74.42px;font-size:13.5px;line-height:19px;transform:scaleX(1.108);-webkit-text-stroke:0.45px #15141a;">Inbox</span>
<span class="t" style="left:318.8px;top:75.64px;font-size:12px;line-height:17px;transform:scaleX(0.953);">113 Messages</span>
<span class="t" style="left:1180.0px;top:75.64px;font-size:12px;line-height:17px;transform:scaleX(0.989);">Quick Filter</span>
<span class="t" style="left:305.9px;top:109.04px;font-size:12px;line-height:17px;transform:scaleX(0.974);">Subject</span>
<span class="t" style="left:662.0px;top:109.04px;font-size:12px;line-height:17px;transform:scaleX(0.990);">Correspondents</span>
<span class="t" style="left:887.5px;top:109.04px;font-size:12px;line-height:17px;transform:scaleX(0.946);">Date</span>
<span class="t rc" style="left:306.0px;top:135.04px;font-size:12px;line-height:17px;color:#1c1b33;transform:scaleX(0.935);">Your</span>
<span class="t rc" style="left:886.8px;top:135.04px;font-size:12px;line-height:17px;color:#1c1b33;transform:scaleX(0.939);">08:19</span>
<span class="t rc" style="left:306.0px;top:159.04px;font-size:12px;line-height:17px;color:#1c1b33;transform:scaleX(0.935);">Your</span>
<span class="t rc" style="left:886.8px;top:159.04px;font-size:12px;line-height:17px;color:#1c1b33;transform:scaleX(0.982);">23/08/2025, 10:04</span>
<span class="t rc" style="left:306.0px;top:183.04px;font-size:12px;line-height:17px;color:#1c1b33;transform:scaleX(0.935);">Your</span>
<span class="t rc" style="left:886.8px;top:183.04px;font-size:12px;line-height:17px;color:#1c1b33;transform:scaleX(0.982);">23/08/2025, 07:41</span>
<span class="t rc" style="left:306.0px;top:207.04px;font-size:12px;line-height:17px;color:#1c1b33;transform:scaleX(0.935);">Your</span>
<span class="t rc" style="left:886.8px;top:207.04px;font-size:12px;line-height:17px;color:#1c1b33;transform:scaleX(0.982);">22/08/2025, 21:23</span>
<span class="t rc" style="left:306.0px;top:231.04px;font-size:12px;line-height:17px;color:#1c1b33;transform:scaleX(0.935);">Fwd:</span>
<span class="t rc" style="left:886.8px;top:231.04px;font-size:12px;line-height:17px;color:#1c1b33;transform:scaleX(0.982);">18/08/2025, 16:02</span>
<span class="t rc" style="left:306.0px;top:255.04px;font-size:12px;line-height:17px;color:#1c1b33;transform:scaleX(0.875);">Re: R</span>
<span class="t rc" style="left:886.8px;top:255.04px;font-size:12px;line-height:17px;color:#1c1b33;transform:scaleX(0.982);">18/08/2025, 13:29</span>
<span class="t rc" style="left:306.0px;top:279.04px;font-size:12px;line-height:17px;color:#1c1b33;transform:scaleX(0.985);">Augu</span>
<span class="t rc" style="left:886.8px;top:279.04px;font-size:12px;line-height:17px;color:#1c1b33;transform:scaleX(0.982);">15/08/2025, 08:01</span>
<span class="t rc" style="left:306.0px;top:303.04px;font-size:12px;line-height:17px;color:#1c1b33;transform:scaleX(0.875);">Re: L</span>
<span class="t rc" style="left:886.8px;top:303.04px;font-size:12px;line-height:17px;color:#1c1b33;transform:scaleX(0.982);">13/08/2025, 21:44</span>
<span class="t rc" style="left:306.0px;top:327.04px;font-size:12px;line-height:17px;color:#1c1b33;transform:scaleX(0.875);">Re: R</span>
<span class="t rc" style="left:886.8px;top:327.04px;font-size:12px;line-height:17px;color:#1c1b33;transform:scaleX(0.991);">11/08/2025, 19:53</span>
<span class="t rc" style="left:306.0px;top:351.04px;font-size:12px;line-height:17px;color:#1c1b33;transform:scaleX(0.985);">5 qui</span>
<span class="t rc" style="left:886.8px;top:351.04px;font-size:12px;line-height:17px;color:#1c1b33;transform:scaleX(0.991);">11/08/2025, 19:00</span>
<span class="t rc" style="left:306.0px;top:375.04px;font-size:12px;line-height:17px;color:#1c1b33;transform:scaleX(0.935);">Fwd:</span>
<span class="t rc" style="left:886.8px;top:375.04px;font-size:12px;line-height:17px;color:#1c1b33;transform:scaleX(0.991);">11/08/2025, 17:31</span>
<span class="t rc" style="left:306.0px;top:399.04px;font-size:12px;line-height:17px;color:#1c1b33;transform:scaleX(0.875);">Re: D</span>
<span class="t rc" style="left:886.8px;top:399.04px;font-size:12px;line-height:17px;color:#1c1b33;transform:scaleX(0.982);">06/08/2025, 16:04</span>
<span class="t rc" style="left:830.3px;top:279.04px;font-size:12px;line-height:17px;color:#1c1b33;transform:scaleX(0.935);">ve</span>
<div style="left:200px;top:538px;width:38px;height:20px;border:1px solid #66666e;border-radius:4px;background:#fbfbfd"></div>
<span class="t" style="left:203.800px;top:541.500px;font-size:12px;line-height:16px;transform:scaleX(0.950)">Tolsey</span>
<div id="redact"></div>
<div style="left:263px;top:413px;width:1030px;height:499px;background:#f9f9fa"></div>
<div style="left:263px;top:412px;width:68px;height:1px;background:#cfcfda"></div><div style="left:833px;top:412px;width:460px;height:1px;background:#cfcfda"></div>
<div id="status"></div>
<svg style="left:51px;top:917.5px" width="18" height="14" viewBox="0 0 18 14" ><circle cx="9" cy="7" r="1.500" fill="none" stroke="#15141a" stroke-width="1.200"/><path d="M6 3.400A4.800 4.800 0 0 0 6 10.600M12 3.400A4.800 4.800 0 0 1 12 10.600M3.700 1.500A7.500 7.500 0 0 0 3.700 12.500M14.300 1.500A7.500 7.500 0 0 1 14.300 12.500" fill="none" stroke="#15141a" stroke-width="1.250" stroke-linecap="round"/></svg>
<div class="vsep" style="left:74px;top:913px;height:21px"></div>
<div class="vsep" style="left:1157px;top:916px;height:16px"></div>
<div style="left:1167px;top:922px;width:120px;height:4px;background:linear-gradient(90deg,#cfe2fb 0%,#9cc6f8 30%,#2f8ff5 58%,#8fbff7 80%,#b7d6fa 100%)"></div>
</div>
</body></html>
